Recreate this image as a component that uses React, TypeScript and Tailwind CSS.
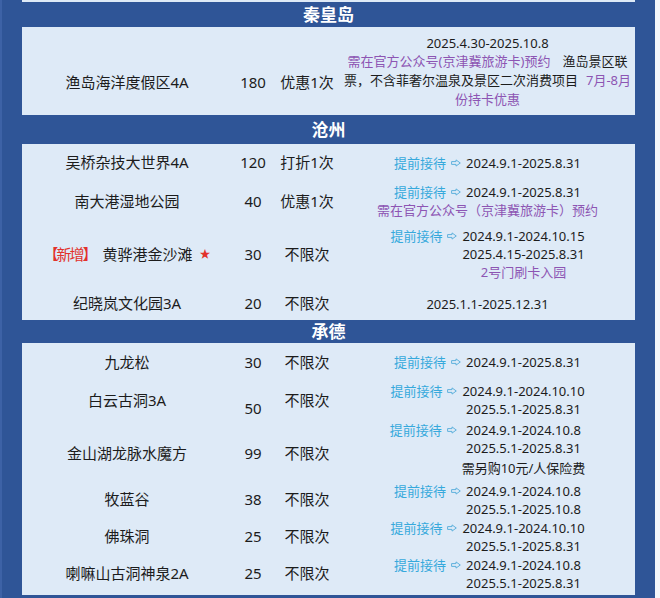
import React from "react";

const FONT = { fontFamily: '"Noto Sans", "Noto Sans CJK SC", sans-serif' };

const Arrow = () => (
  <svg width="10" height="8" viewBox="0 0 10 8" className="mx-[5px] shrink-0">
    <path
      d="M0.6 2.6H5V0.9L9.3 4L5 7.1V5.4H0.6Z"
      fill="none"
      stroke="#5fb1dc"
      strokeWidth="1"
      strokeLinejoin="round"
    />
  </svg>
);

type EarlyProps = { dates: string[]; extra?: React.ReactNode };

const Early = ({ dates, extra }: EarlyProps) => (
  <div className="flex justify-center items-start">
    <div className="flex items-center h-[18px]">
      <span className="text-[#36a9dc]">提前接待</span>
      <Arrow />
    </div>
    <div className="flex flex-col items-center">
      {dates.map((d) => (
        <div key={d}>{d}</div>
      ))}
      {extra}
    </div>
  </div>
);

type RowProps = {
  h: string;
  name: React.ReactNode;
  price: string;
  times: string;
  note: React.ReactNode;
  nameCls?: string;
  priceCls?: string;
};

const Row = ({ h, name, price, times, note, nameCls = "", priceCls = "" }: RowProps) => (
  <div className={`grid grid-cols-[210px_42px_66px_1fr] ${h}`}>
    <div className={`flex items-center justify-center text-[15px] ${nameCls}`}>{name}</div>
    <div className={`flex items-center justify-center text-[15px] ${priceCls || nameCls}`}>{price}</div>
    <div className={`flex items-center justify-center text-[15px] ${nameCls}`}>{times}</div>
    <div className="flex flex-col items-center justify-center text-[13px] leading-[18px]">{note}</div>
  </div>
);

const Header = ({ title, h }: { title: string; h: string }) => (
  <div className={`flex items-center justify-center text-white font-bold text-[17px] ${h}`}>{title}</div>
);

const Purple = ({ children }: { children: React.ReactNode }) => (
  <span className="text-[#8d55b3]">{children}</span>
);

export default function App() {
  return (
    <div className="flex w-[660px] h-[598px] overflow-hidden text-[#1c1c1c]" style={FONT}>
      <div className="w-[655px] h-full bg-[#2f5597] border-l-2 border-[#3d62a6] pl-[20px] pr-[20px] flex flex-col">
        <div className="h-[2px] bg-[#deeaf7]" />
        <Header title="秦皇岛" h="h-[25px]" />
        <div className="bg-[#deeaf7] h-[88px]">
          <Row
            h="h-[88px]"
            nameCls="pt-[22px]"
            name="渔岛海洋度假区4A"
            price="180"
            times="优惠1次"
            note={
              <div className="flex flex-col items-center leading-[18.7px] whitespace-pre">
                <div>2025.4.30-2025.10.8</div>
                <div>
                  <Purple>需在官方公众号(京津冀旅游卡)预约</Purple>
                  <span className="ml-3">渔岛景区联</span>
                </div>
                <div>
                  <span>票，不含菲奢尔温泉及景区二次消费项目</span>
                  <span className="ml-2">
                    <Purple>7月-8月</Purple>
                  </span>
                </div>
                <div>
                  <Purple>份持卡优惠</Purple>
                </div>
              </div>
            }
          />
        </div>
        <Header title="沧州" h="h-[29px]" />
        <div className="bg-[#deeaf7] h-[176px]">
          <Row h="h-[37px]" name="吴桥杂技大世界4A" price="120" times="打折1次" note={<Early dates={["2024.9.1-2025.8.31"]} />} />
          <Row
            h="h-[40px]"
            name="南大港湿地公园"
            price="40"
            times="优惠1次"
            note={
              <>
                <Early dates={["2024.9.1-2025.8.31"]} />
                <Purple>需在官方公众号（京津冀旅游卡）预约</Purple>
              </>
            }
          />
          <Row
            h="h-[66px]"
            name={
              <span className="flex items-center">
                <span className="text-[#e2312b] tracking-[-2px]">【新增】</span>
                <span className="ml-[7px]">黄骅港金沙滩</span>
                <span className="ml-[7px] text-[#e2312b] text-[11px]">★</span>
              </span>
            }
            price="30"
            times="不限次"
            note={
              <Early
                dates={["2024.9.1-2024.10.15", "2025.4.15-2025.8.31"]}
                extra={<Purple>2号门刷卡入园</Purple>}
              />
            }
          />
          <Row h="h-[33px]" name="纪晓岚文化园3A" price="20" times="不限次" note={<div>2025.1.1-2025.12.31</div>} />
        </div>
        <Header title="承德" h="h-[23px]" />
        <div className="bg-[#deeaf7] h-[252px]">
          <Row h="h-[38px]" name="九龙松" price="30" times="不限次" note={<Early dates={["2024.9.1-2025.8.31"]} />} />
          <Row
            h="h-[36px]"
            name="白云古洞3A"
            price="50"
            priceCls="pt-[16px]"
            times="不限次"
            note={<Early dates={["2024.9.1-2024.10.10", "2025.5.1-2025.8.31"]} />}
          />
          <Row
            h="h-[64px]"
            nameCls="pt-[8px]"
            name="金山湖龙脉水魔方"
            price="99"
            times="不限次"
            note={
              <Early
                dates={["2024.9.1-2024.10.8", "2025.5.1-2025.8.31"]}
                extra={<div className="mt-[2px]">需另购10元/人保险费</div>}
              />
            }
          />
          <Row h="h-[37px]" name="牧蓝谷" price="38" times="不限次" note={<Early dates={["2024.9.1-2024.10.8", "2025.5.1-2025.10.8"]} />} />
          <Row h="h-[37px]" name="佛珠洞" price="25" times="不限次" note={<Early dates={["2024.9.1-2024.10.10", "2025.5.1-2025.8.31"]} />} />
          <Row h="h-[37px]" name="喇嘛山古洞神泉2A" price="25" times="不限次" note={<Early dates={["2024.9.1-2024.10.8", "2025.5.1-2025.8.31"]} />} />
        </div>
        <div className="flex-1" />
      </div>
      <div className="flex-1 h-full bg-[#f4f7fb]" />
    </div>
  );
}
